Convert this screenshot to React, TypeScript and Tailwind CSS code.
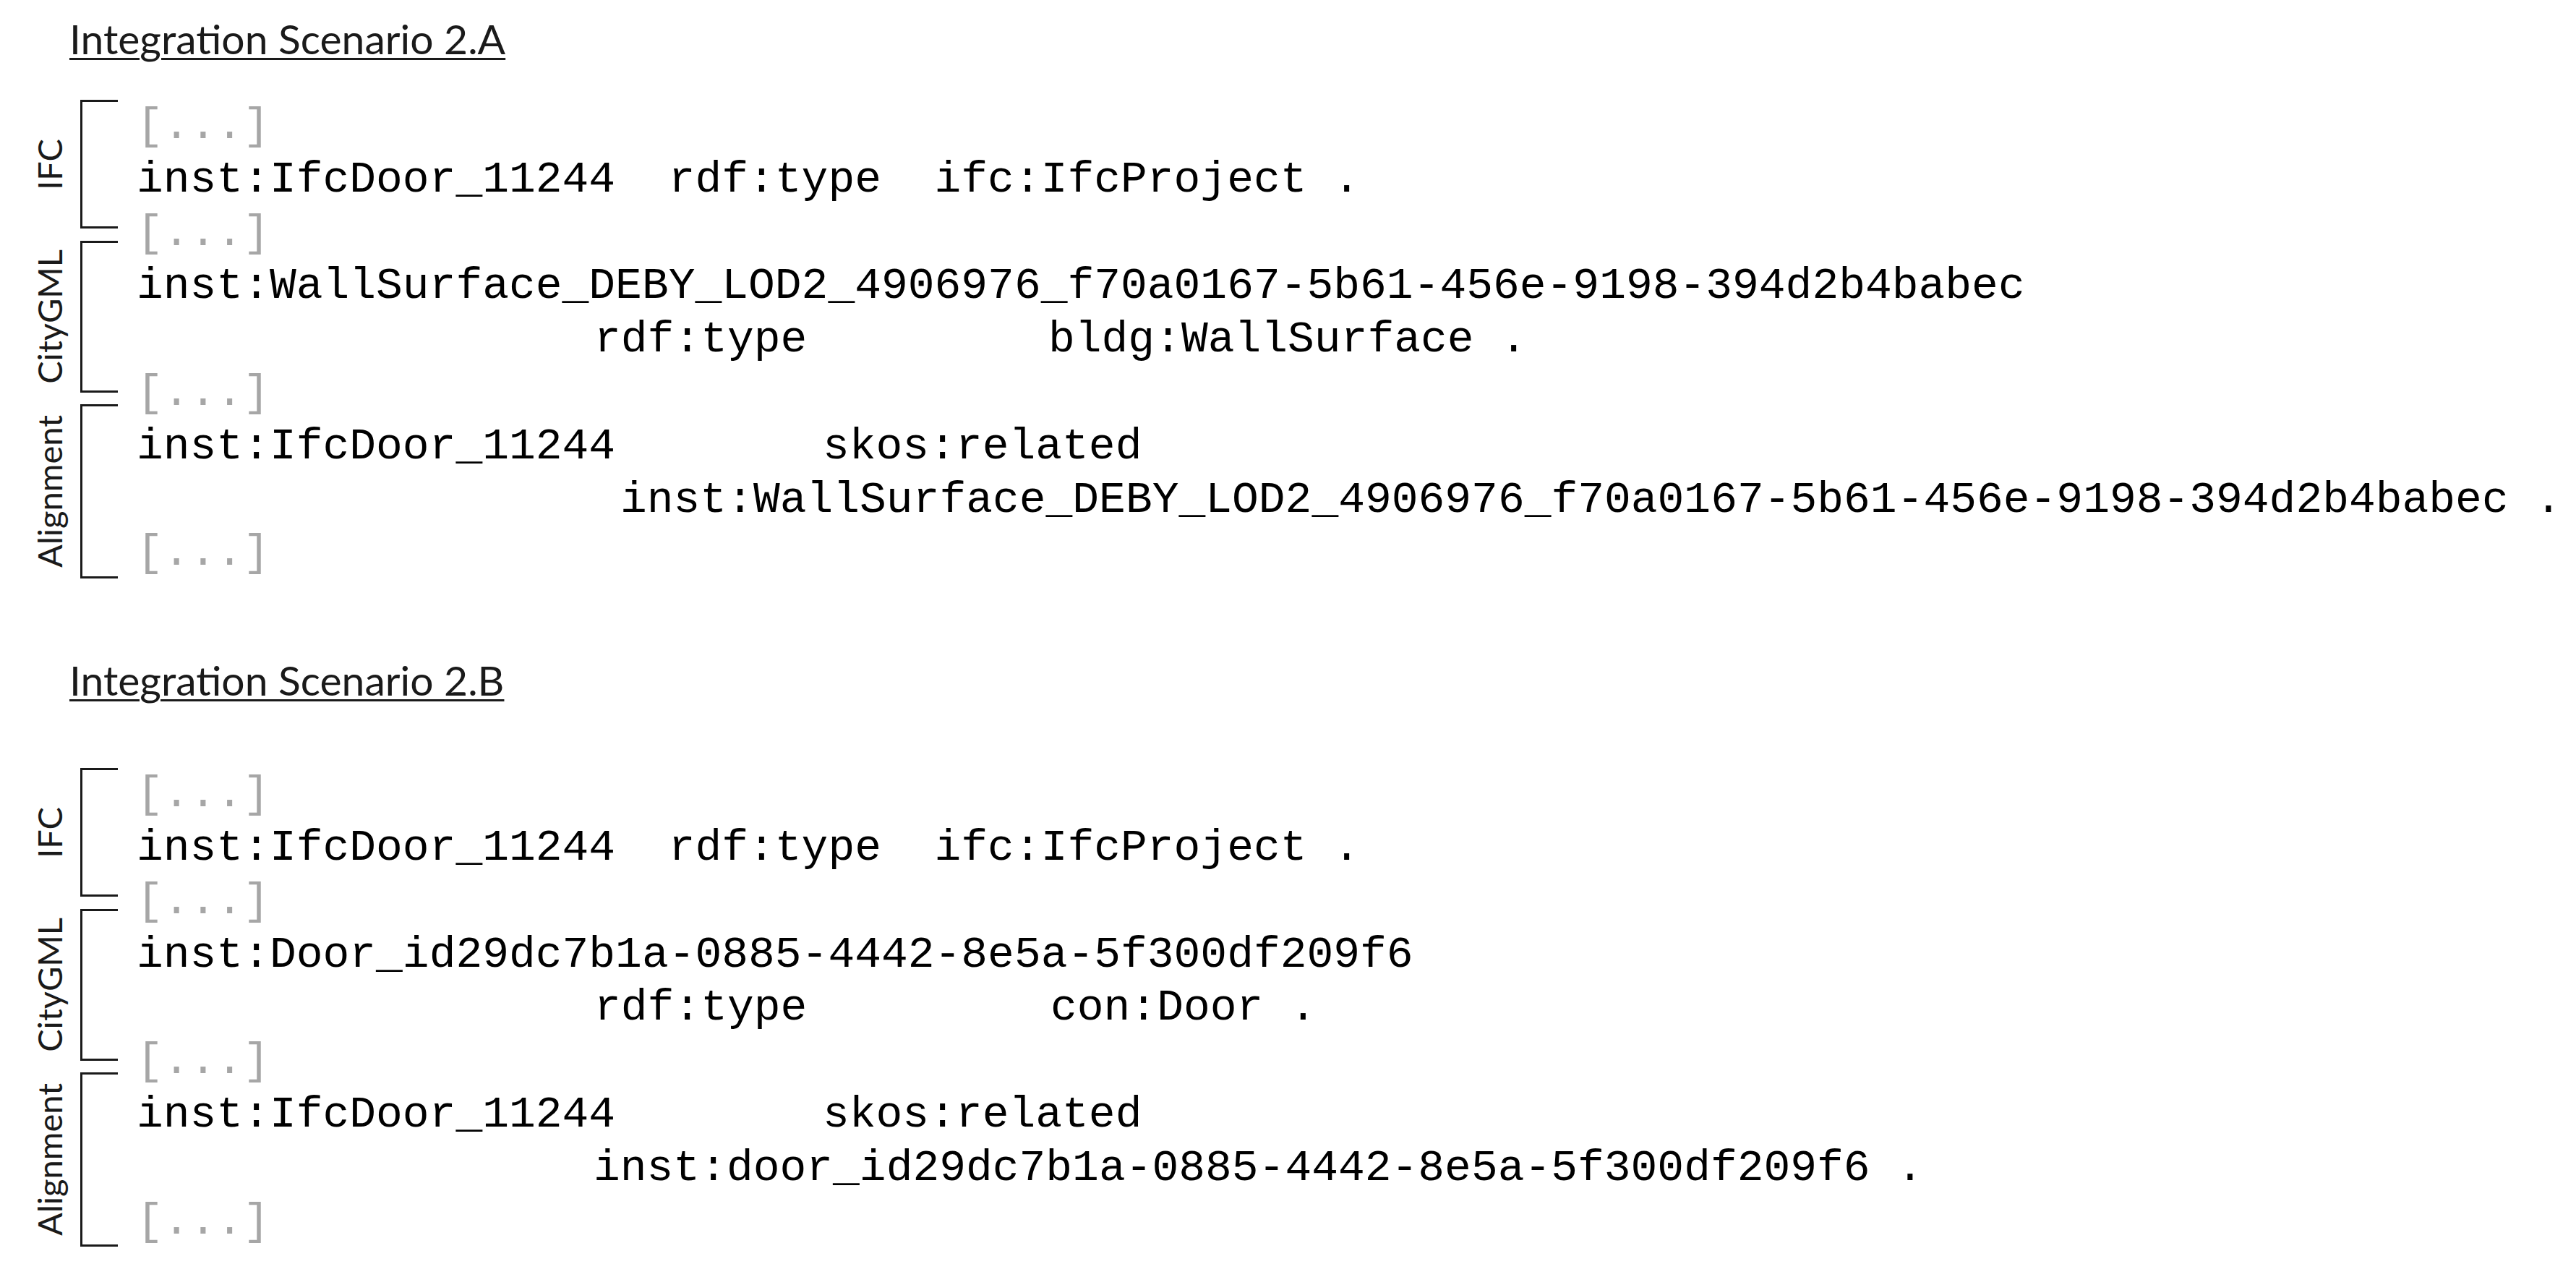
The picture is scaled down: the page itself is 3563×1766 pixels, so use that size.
import React from 'react';

const mono = "font-['Liberation_Mono',monospace]";

function Dots() {
  return <span className="text-[#a6a6a6]">[...]</span>;
}

function Line(props: { children?: React.ReactNode }) {
  return (
    <div className="flex h-[73.8px] items-center whitespace-pre leading-[73.8px]">
      {props.children}
    </div>
  );
}

function Bracket(props: { label: string; height: string; top: string }) {
  const { label, height, top } = props;
  return (
    <div className={`flex ${top}`}>
      <div className="flex w-[48px] items-center justify-center">
        <span className="rotate-180 whitespace-nowrap font-['Lato',sans-serif] text-[47px] leading-none text-[#1a1a1a] [writing-mode:vertical-rl]">
          {label}
        </span>
      </div>
      <div
        className={`ml-[19px] w-[52px] border-y-[3px] border-l-[3px] border-[#1a1a1a] ${height}`}
      />
    </div>
  );
}

function Title(props: { text: string; className: string }) {
  return (
    <div
      className={`ml-[52px] h-[68px] font-['Lato',sans-serif] text-[57px] leading-[68px] text-[#1a1a1a] underline decoration-[3px] underline-offset-[5px] ${props.className}`}
    >
      {props.text}
    </div>
  );
}

function Section(props: { rows: React.ReactNode[] }) {
  return (
    <div className="flex">
      <div className="flex flex-col">
        <Bracket label="IFC" height="h-[178px]" top="mt-0" />
        <Bracket label="CityGML" height="h-[210px]" top="mt-[17px]" />
        <Bracket label="Alignment" height="h-[241px]" top="mt-[16px]" />
      </div>
      <div className={`ml-[26px] flex flex-col text-[61.3px] text-black ${mono}`}>
        {props.rows.map((r, i) => (
          <Line key={i}>{r}</Line>
        ))}
      </div>
    </div>
  );
}

export default function App() {
  const rowsA: React.ReactNode[] = [
    <Dots />,
    <span>inst:IfcDoor_11244  rdf:type  ifc:IfcProject .</span>,
    <Dots />,
    <span>inst:WallSurface_DEBY_LOD2_4906976_f70a0167-5b61-456e-9198-394d2b4babec</span>,
    <>
      <span className="w-[633px] shrink-0" />
      <span className="w-[628px] shrink-0">rdf:type</span>
      <span>bldg:WallSurface .</span>
    </>,
    <Dots />,
    <>
      <span className="w-[949px] shrink-0">inst:IfcDoor_11244</span>
      <span>skos:related</span>
    </>,
    <>
      <span className="w-[669px] shrink-0" />
      <span>inst:WallSurface_DEBY_LOD2_4906976_f70a0167-5b61-456e-9198-394d2b4babec .</span>
    </>,
    <Dots />,
  ];

  const rowsB: React.ReactNode[] = [
    <Dots />,
    <span>inst:IfcDoor_11244  rdf:type  ifc:IfcProject .</span>,
    <Dots />,
    <span>inst:Door_id29dc7b1a-0885-4442-8e5a-5f300df209f6</span>,
    <>
      <span className="w-[633px] shrink-0" />
      <span className="w-[631px] shrink-0">rdf:type</span>
      <span>con:Door .</span>
    </>,
    <Dots />,
    <>
      <span className="w-[949px] shrink-0">inst:IfcDoor_11244</span>
      <span>skos:related</span>
    </>,
    <>
      <span className="w-[632px] shrink-0" />
      <span>inst:door_id29dc7b1a-0885-4442-8e5a-5f300df209f6 .</span>
    </>,
    <Dots />,
  ];

  return (
    <div className="min-h-screen w-full bg-white pl-[44px] pt-[19px]">
      <Title text="Integration Scenario 2.A" className="" />
      <div className="mt-[51px]">
        <Section rows={rowsA} />
      </div>
      <Title text="Integration Scenario 2.B" className="mt-[104px]" />
      <div className="mt-[88px]">
        <Section rows={rowsB} />
      </div>
    </div>
  );
}
